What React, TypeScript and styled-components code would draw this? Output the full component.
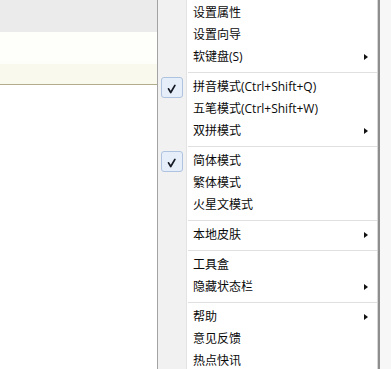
import React from "react";
import styled, { createGlobalStyle } from "styled-components";

type MenuEntry =
  | { kind: "item"; label: string; checked?: boolean; submenu?: boolean }
  | { kind: "separator" };

const entries: MenuEntry[] = [
  { kind: "item", label: "设置属性" },
  { kind: "item", label: "设置向导" },
  { kind: "item", label: "软键盘(S)", submenu: true },
  { kind: "separator" },
  { kind: "item", label: "拼音模式(Ctrl+Shift+Q)", checked: true },
  { kind: "item", label: "五笔模式(Ctrl+Shift+W)" },
  { kind: "item", label: "双拼模式", submenu: true },
  { kind: "separator" },
  { kind: "item", label: "简体模式", checked: true },
  { kind: "item", label: "繁体模式" },
  { kind: "item", label: "火星文模式" },
  { kind: "separator" },
  { kind: "item", label: "本地皮肤", submenu: true },
  { kind: "separator" },
  { kind: "item", label: "工具盒" },
  { kind: "item", label: "隐藏状态栏", submenu: true },
  { kind: "separator" },
  { kind: "item", label: "帮助", submenu: true },
  { kind: "item", label: "意见反馈" },
  { kind: "item", label: "热点快讯" },
];

// 체크 표시
const CheckMark = () => (
  <svg width="22" height="21" viewBox="0 0 22 21">
    <path d="M7.2 12 L9.6 16 L14.2 8.2" fill="none" stroke="#151a24" strokeWidth="1.9" strokeLinecap="round" strokeLinejoin="round" />
  </svg>
);

const App = () => {
  return (
    <>
      <GlobalStyle />
      <Page>
        <Backdrop>
          <TitleBar />
          <BlankArea />
          <HintBand />
          <InputBar />
          <Filler />
        </Backdrop>

        <Menu>
          {entries.map((entry, i) =>
            entry.kind === "separator" ? (
              <Separator key={i} />
            ) : (
              <MenuItem key={i}>
                <Gutter>{entry.checked && <CheckBox><CheckMark /></CheckBox>}</Gutter>
                <Label>{entry.label}</Label>
                {entry.submenu && <Arrow />}
              </MenuItem>
            )
          )}
        </Menu>

        <RightEdge />
      </Page>
    </>
  );
};

export default App;

const GlobalStyle = createGlobalStyle`
  html, body {
    margin: 0;
    padding: 0;
    height: 100%;
    overflow: hidden;
    background: #fff;
  }
  #root {
    height: 100%;
  }
`;

const Page = styled.div`
  display: flex;
  height: 100vh;
  font-family: "Open Sans", "Noto Sans CJK SC", sans-serif;
`;

const Backdrop = styled.div`
  width: 157px;
  flex: none;
  display: flex;
  flex-direction: column;
`;

const TitleBar = styled.div`
  height: 32px;
  background-color: #ebebeb;
`;

const BlankArea = styled.div`
  height: 29px;
  background-color: #fefefb;
`;

const HintBand = styled.div`
  height: 3px;
  background-color: #fdfdfa;
`;

const InputBar = styled.div`
  height: 20px;
  background-color: #f9f9ed;
  border-bottom: 1px solid #b3ac8c;
`;

const Filler = styled.div`
  flex: 1;
  background-color: #fff;
`;

const Menu = styled.div`
  width: 223px;
  flex: none;
  box-sizing: border-box;
  padding-top: 2px;
  border-left: 1px solid #a3a3a3;
  border-right: 2px solid #8e8e8e;
  background: linear-gradient(
    to right,
    #f1f1f1 0 28px,
    #e2e3e3 28px 29px,
    #ffffff 29px
  );
  box-shadow: inset -1px 0 0 #d6d6d6;
`;

const MenuItem = styled.div`
  display: flex;
  align-items: center;
  height: 22px;
`;

const Gutter = styled.div`
  width: 30px;
  height: 22px;
  flex: none;
  display: flex;
  align-items: center;
`;

const CheckBox = styled.div`
  width: 22px;
  height: 21px;
  margin-left: 3px;
  box-sizing: border-box;
  border: 1px solid #adc3df;
  border-radius: 3px;
  background-color: #e6eef9;
  display: flex;
  align-items: center;
  justify-content: center;
  svg {
    display: block;
  }
`;

const Label = styled.span`
  flex: 1;
  padding-left: 5px;
  font-size: 12px;
  line-height: 22px;
  color: #0a0a0a;
  white-space: nowrap;
`;

const Arrow = styled.span`
  width: 0;
  height: 0;
  margin-right: 10px;
  border-left: 4px solid #111;
  border-top: 3.5px solid transparent;
  border-bottom: 3.5px solid transparent;
`;

const Separator = styled.div`
  height: 1px;
  margin: 4px 1px 2px 30px;
  background-color: #e0e0e0;
  border-bottom: 1px solid #fff;
`;

const RightEdge = styled.div`
  flex: 1;
  background-color: #f7f7f7;
`;
